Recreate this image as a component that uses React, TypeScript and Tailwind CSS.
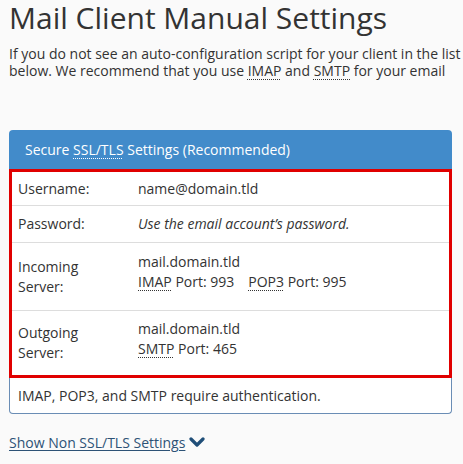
import React from "react";

const abbr = "underline decoration-dotted decoration-1 underline-offset-[3px]";

const ROWS = [
  { label: ["Username:"], value: <div>name@domain.tld</div>, cls: "h-[34px]" },
  {
    label: ["Password:"],
    value: <div className="italic">Use the email account’s password.</div>,
    cls: "h-[37px]",
  },
  {
    label: ["Incoming", "Server:"],
    value: (
      <div className="pb-[9px]">
        <div>mail.domain.tld</div>
        <div>
          <span className={abbr}>IMAP</span> Port: 993
          <span className={`${abbr} ml-[14px]`}>POP3</span> Port: 995
        </div>
      </div>
    ),
    cls: "h-[68px]",
  },
  {
    label: ["Outgoing", "Server:"],
    value: (
      <div className="pb-[8px]">
        <div>mail.domain.tld</div>
        <div>
          <span className={abbr}>SMTP</span> Port: 465
        </div>
      </div>
    ),
    cls: "h-[64px]",
  },
];

export default function App() {
  return (
    <div
      className="w-[463px] h-[464px] overflow-hidden bg-[#fafafa] text-[#333] text-[14px] leading-[20px]"
      style={{ fontFamily: '"Open Sans", "Liberation Sans", sans-serif' }}
    >
      <h1 className="pl-[9px] pt-[1px] text-[30px] leading-[33px] font-normal text-[#333] whitespace-nowrap">
        Mail Client Manual Settings
      </h1>
      <p className="pl-[9px] mt-[11px] leading-[17px] whitespace-nowrap">
        If you do not see an auto-configuration script for your client in the list
        <br />
        below. We recommend that you use <span className={abbr}>IMAP</span> and{" "}
        <span className={abbr}>SMTP</span> for your email
      </p>

      <div className="ml-[9px] mt-[51px] w-[443px]">
        <div className="h-[39px] rounded-t-[4px] bg-[#428bca] text-white px-[16px] flex items-center">
          <span>
            Secure <span className={abbr}>SSL/TLS</span> Settings (Recommended)
          </span>
        </div>
        <div className="border-[3px] border-[#e00000] bg-white">
          {ROWS.map((row, i) => (
            <div
              key={i}
              className={`flex ${row.cls} ${i < ROWS.length - 1 ? "border-b border-[#ddd]" : ""}`}
            >
              <div className="w-[126px] pl-[6px] self-center">
                {row.label.map((l) => (
                  <div key={l}>{l}</div>
                ))}
              </div>
              <div className="self-center">{row.value}</div>
            </div>
          ))}
        </div>
        <div className="h-[36px] bg-white border-x border-b border-[#6a8db5] rounded-b-[4px] pl-[8px] flex items-center">
          IMAP, POP3, and SMTP require authentication.
        </div>
      </div>

      <div className="pl-[9px] mt-[19px] flex items-center text-[#2d5276]">
        <span className="underline underline-offset-[2px]">Show Non SSL/TLS Settings </span>
        <svg width="16" height="11" viewBox="0 0 16 11" className="ml-[4px] mt-[-2px]">
          <polyline
            points="2,2 8,8 14,2"
            fill="none"
            stroke="#1f4e78"
            strokeWidth="3.2"
            strokeLinecap="round"
            strokeLinejoin="round"
          />
        </svg>
      </div>
    </div>
  );
}
